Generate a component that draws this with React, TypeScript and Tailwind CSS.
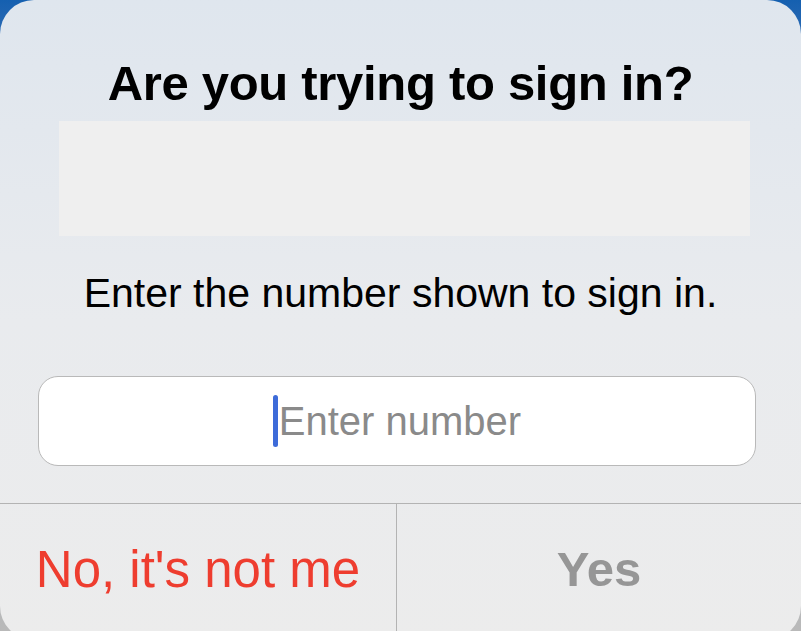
export default function App() {
  return (
    <div className="relative h-[631px] w-[801px] overflow-hidden bg-gradient-to-b from-[#1560b0] via-[#9fb3c8] to-[#b9b9b9]">
      {/* dialog card */}
      <div
        className="flex h-[640px] w-[801px] flex-col overflow-hidden rounded-[34px] bg-gradient-to-b from-[#dfe6ee] via-[#e9ebee] to-[#ececec]"
        style={{ fontFamily: "'Liberation Sans', Arial, sans-serif" }}
      >
        <h1 className="mt-[54px] text-center text-[49px] font-bold leading-[58px] tracking-[-0.3px] text-black">
          Are you trying to sign in?
        </h1>

        {/* number placeholder block */}
        <div className="ml-[59px] mt-[9px] h-[115px] w-[691px] bg-[#efefef]" />

        <p className="mt-[33px] text-center text-[41px] leading-[48px] text-black">
          Enter the number shown to sign in.
        </p>

        <div className="ml-[38px] mt-[59px] flex h-[91px] w-[718px] items-center justify-center rounded-[20px] border border-[#b9b9b9] bg-white">
          <div className="flex items-center">
            <span className="mr-[1px] h-[52px] w-[5px] rounded-full bg-[#3d6bd9]" />
            <span className="text-[40px] text-[#8a8a8a]">Enter number</span>
          </div>
        </div>

        <div className="mt-[37px] flex h-[137px] border-t border-[#b3b3b3]">
          <button className="flex w-[397px] items-center justify-center border-r border-[#b3b3b3] pb-[4px] text-[51px] text-[#ee3d2f]">
            No, it's not me
          </button>
          <button className="flex flex-1 items-center justify-center pb-[4px] text-[49px] font-bold text-[#969696]">
            Yes
          </button>
        </div>
      </div>
    </div>
  );
}
